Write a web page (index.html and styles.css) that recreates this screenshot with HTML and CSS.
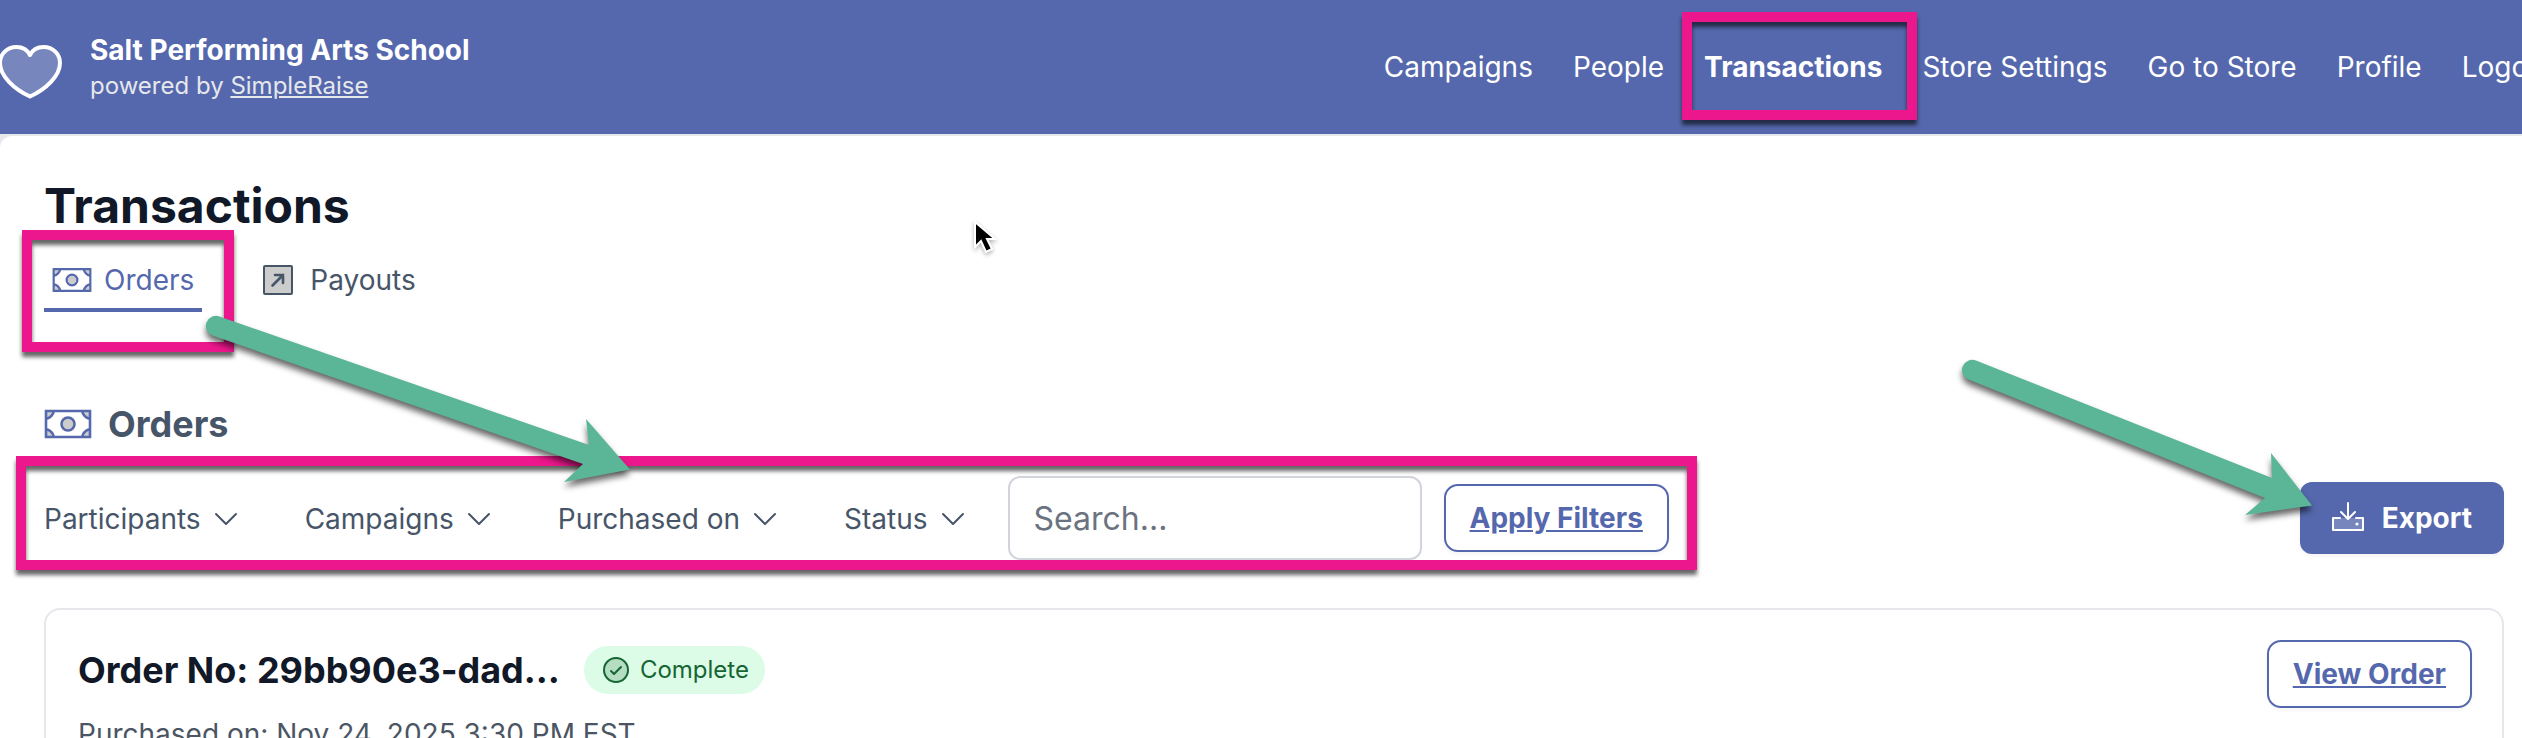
FILE: index.html
```html
<!DOCTYPE html>
<html lang="en">
<head>
    <meta charset="UTF-8">
    <meta name="viewport" content="width=device-width, initial-scale=1.0">
    <title>Transactions - Salt Performing Arts School</title>
    <link rel="stylesheet" href="styles.css">
</head>
<body>

    <!-- Shared icon shapes -->
    <svg class="sprite" aria-hidden="true">
        <symbol id="icon-money" viewBox="0 0 48 48">
            <path d="M2 11h8c-1 4-4 7-8 8zM46 11h-8c1 4 4 7 8 8zM2 37h8c-1-4-4-7-8-8zM46 37h-8c1-4 4-7 8-8z" fill="#000" fill-opacity=".2"/>
            <path d="M2 11h44v26H2zM2 19C6 18 9 15 10 11M46 19C42 18 39 15 38 11M2 29C6 30 9 33 10 37M46 29C42 30 39 33 38 37" fill="none" stroke="currentColor" stroke-width="2.600"/>
            <circle cx="24" cy="24" r="6.500" fill="#000" fill-opacity=".2"/>
            <circle cx="24" cy="24" r="6.500" fill="none" stroke="currentColor" stroke-width="2.600"/>
        </symbol>
        <symbol id="icon-chevron" viewBox="0 0 28 28">
            <path d="M3 9l10 10L23 9" fill="none" stroke="currentColor" stroke-width="2" stroke-linecap="round" stroke-linejoin="round"/>
        </symbol>
    </svg>

    <header class="site-header">
        <div class="brand">
            <svg class="brand-logo" viewBox="0 0 64 64" aria-hidden="true">
                <path d="M30 20C33 14 38 12 43.500 12 53 12 60 19 60 28 60 41 46 54 30 61.500 14 54 0 41 0 28 0 19 7 12 16.500 12 22 12 27 14 30 20z" fill="#fff" fill-opacity=".2" stroke="#fff" stroke-width="4" stroke-linejoin="round"/>
            </svg>
            <div class="brand-text">
                <div class="brand-name">Salt Performing Arts School</div>
                <div class="brand-powered">powered by <a href="#">SimpleRaise</a></div>
            </div>
        </div>
        <nav class="main-nav">
            <a href="#">Campaigns</a>
            <a href="#">People</a>
            <a href="#" class="active">Transactions<span class="highlight highlight-nav"></span></a>
            <a href="#">Store Settings</a>
            <a href="#">Go to Store</a>
            <a href="#">Profile</a>
            <a href="#">Logout</a>
        </nav>
    </header>

    <main class="page">
        <h1>Transactions</h1>

        <div class="tabs">
            <a href="#" class="tab selected">
                <svg class="tab-icon" aria-hidden="true"><use href="#icon-money"/></svg>
                Orders
                <span class="highlight highlight-tab"></span>
            </a>
            <a href="#" class="tab">
                <svg class="tab-icon" viewBox="0 0 40 40" aria-hidden="true">
                    <rect x="6" y="6" width="28" height="28" rx="1" fill="#000" fill-opacity=".2" stroke="currentColor" stroke-width="2"/>
                    <path d="M14.500 25.500L25 15M17 15h8v8" fill="none" stroke="currentColor" stroke-width="2.600" stroke-linecap="round"/>
                </svg>
                Payouts
            </a>
        </div>

        <h2><svg class="heading-icon" aria-hidden="true"><use href="#icon-money"/></svg>Orders</h2>

        <div class="toolbar">
            <form class="filters">
                <button type="button" class="filter">Participants <svg class="chevron" aria-hidden="true"><use href="#icon-chevron"/></svg></button>
                <button type="button" class="filter">Campaigns <svg class="chevron" aria-hidden="true"><use href="#icon-chevron"/></svg></button>
                <button type="button" class="filter">Purchased on <svg class="chevron" aria-hidden="true"><use href="#icon-chevron"/></svg></button>
                <button type="button" class="filter">Status <svg class="chevron" aria-hidden="true"><use href="#icon-chevron"/></svg></button>
                <div class="search-group">
                    <input type="text" class="search" placeholder="Search..." aria-label="Search">
                    <button type="button" class="btn btn-outline">Apply Filters</button>
                </div>
                <span class="highlight highlight-filters"></span>
            </form>
            <button type="button" class="btn btn-primary">
                <svg class="export-icon" viewBox="0 0 32 32" aria-hidden="true">
                    <path d="M1 16h30v12H1z" fill="#fff" fill-opacity=".2"/>
                    <path d="M8 16H1v12h30V16h-7M16 1v16M9 10l7 7 7-7" fill="none" stroke="currentColor" stroke-width="2" stroke-linecap="round" stroke-linejoin="round"/>
                    <circle cx="25" cy="22" r="1.600" fill="currentColor"/>
                </svg>
                Export
            </button>
        </div>

        <section class="order-card">
            <div class="order-head">
                <div class="order-title">
                    <h3>Order No: 29bb90e3-dad…</h3>
                    <span class="badge">
                        <svg class="badge-icon" viewBox="0 0 32 32" aria-hidden="true">
                            <circle cx="16" cy="16" r="12" fill="#166534" fill-opacity=".2" stroke="currentColor" stroke-width="2"/>
                            <path d="M11 17l3 3 7-7" fill="none" stroke="currentColor" stroke-width="2" stroke-linecap="round" stroke-linejoin="round"/>
                        </svg>
                        Complete
                    </span>
                </div>
                <a href="#" class="btn btn-outline">View Order</a>
            </div>
            <p class="order-date">Purchased on: Nov 24, 2025 3:30 PM EST</p>
        </section>
    </main>

    <!-- Guide arrows and pointer drawn over the page -->
    <svg class="arrow arrow-filters" viewBox="0 0 440 180" aria-hidden="true">
        <path d="M19.500 6.500L389 135l-3-26 44 50.500-66 12.500 19-18L12.500 25.500A10 10 0 0 1 19.500 6.500z"/>
    </svg>
    <svg class="arrow arrow-export" viewBox="0 0 360 165" aria-hidden="true">
        <path d="M16 10.500L312 128l-1-25 41 52.500L285 165l20-17L8.500 29.500A10 10 0 0 1 16 10.500z"/>
    </svg>
    <svg class="cursor" viewBox="0 0 24 36" aria-hidden="true">
        <path d="M2 2v25l6-6 5 11 6-3-5-10h8z" fill="#000" stroke="#fff" stroke-width="2"/>
    </svg>

</body>
</html>
```
FILE: styles.css
```css
* {
    box-sizing: border-box;
}
body {
    font-family: Inter, sans-serif;
    font-size: 28px;
    line-height: 40px;
    color: #475569;
    background-color: #e5e7eb;
    margin: 0;
    min-height: 100vh;
    position: relative;
    overflow: hidden;
    display: flex;
    flex-direction: column;
}
h1, h2, h3, p {
    margin: 0;
}
a {
    color: inherit;
}
button, input {
    font: inherit;
    color: inherit;
}
svg {
    flex: none;
}
.sprite {
    position: absolute;
    width: 0;
    height: 0;
}

/* Header */
.site-header {
    display: flex;
    justify-content: space-between;
    align-items: center;
    height: 134px;
    margin-right: -32px;
    background-color: #5568ad;
    color: #fff;
    white-space: nowrap;
}
.brand {
    display: flex;
    align-items: center;
    gap: 26px;
}
.brand-logo {
    width: 64px;
    height: 64px;
    overflow: visible;
}
.brand-text {
    padding-top: 2px;
}
.brand-name {
    font-weight: 700;
    line-height: 36px;
}
.brand-powered {
    font-size: 24px;
    line-height: 36px;
    color: #e5e7eb;
}
.main-nav {
    display: flex;
    gap: 40px;
}
.main-nav a {
    text-decoration: none;
    position: relative;
}
.main-nav .active {
    font-weight: 700;
}

/* Page */
.page {
    flex: 1;
    margin-top: 2px;
    padding: 42px 18px 0 44px;
    background-color: #fff;
    border-top-left-radius: 12px;
}
h1 {
    font-size: 48px;
    line-height: 56px;
    font-weight: 700;
    color: #111827;
}
.tabs {
    display: flex;
    gap: 48px;
    margin-top: 16px;
}
.tab {
    display: flex;
    align-items: center;
    gap: 12px;
    height: 62px;
    padding: 2px 8px 0;
    border-bottom: 4px solid transparent;
    text-decoration: none;
    position: relative;
}
.tab.selected {
    color: #5568ad;
    border-color: #5568ad;
}
.tab-icon {
    width: 40px;
    height: 40px;
}
h2 {
    display: flex;
    align-items: center;
    gap: 16px;
    margin-top: 84px;
    font-size: 36px;
    line-height: 56px;
    font-weight: 700;
}
.heading-icon {
    width: 48px;
    height: 48px;
    color: #5568ad;
}

/* Filters */
.toolbar {
    display: flex;
    justify-content: space-between;
    align-items: center;
    margin-top: 24px;
}
.filters {
    display: flex;
    align-items: center;
    gap: 64px;
    position: relative;
}
.filter {
    display: flex;
    align-items: center;
    gap: 12px;
    padding: 2px 0 0;
    border: 0;
    background: none;
    white-space: nowrap;
}
.chevron {
    width: 28px;
    height: 28px;
}
.search-group {
    display: flex;
    align-items: center;
    gap: 22px;
    margin-left: -24px;
}
.search {
    width: 414px;
    height: 84px;
    padding: 0 24px;
    font-size: 32px;
    background: #fff;
    border: 2px solid #d1d5db;
    border-radius: 12px;
}
.search::placeholder {
    color: #6b7280;
    opacity: 1;
}
.btn {
    display: flex;
    align-items: center;
    font-weight: 700;
    white-space: nowrap;
    border-radius: 14px;
    box-shadow: 0 2px 4px rgba(0,0,0,0.05);
}
.btn-outline {
    height: 68px;
    padding: 0 24px;
    color: #5568ad;
    background: #fff;
    border: 2px solid #5568ad;
    text-decoration: underline;
}
.btn-primary {
    height: 72px;
    gap: 18px;
    padding: 0 32px;
    color: #fff;
    background-color: #5568ad;
    border: 0;
    border-radius: 12px;
}
.export-icon {
    width: 32px;
    height: 32px;
}

/* Order card */
.order-card {
    margin-top: 48px;
    padding: 30px 30px 30px 32px;
    border: 2px solid #e5e7eb;
    border-radius: 16px;
}
.order-head {
    display: flex;
    align-items: flex-start;
    justify-content: space-between;
}
.order-title {
    display: flex;
    align-items: center;
    gap: 24px;
}
h3 {
    font-size: 36px;
    line-height: 60px;
    font-weight: 700;
    color: #111827;
}
.badge {
    display: flex;
    align-items: center;
    gap: 8px;
    height: 48px;
    padding: 0 16px;
    font-size: 24px;
    color: #166534;
    background-color: #dcfce7;
    border-radius: 24px;
}
.badge-icon {
    width: 32px;
    height: 32px;
}
.order-date {
    margin-top: 6px;
    color: #4b5563;
}

/* Highlight boxes and arrows */
.highlight {
    position: absolute;
    border: 10px solid #ec178c;
    filter: drop-shadow(0 5px 2px rgba(0,0,0,0.6));
    pointer-events: none;
}
.highlight-nav {
    inset: -35px -35px -33px -22px;
}
.highlight-tab {
    inset: -20px -32px -44px -22px;
}
.highlight-filters {
    inset: -20px -28px -10px -28px;
}
.arrow {
    position: absolute;
    fill: #5bb597;
    filter: drop-shadow(0 5px 3px rgba(0,0,0,0.6));
    pointer-events: none;
}
.arrow-filters {
    top: 310px;
    left: 200px;
    width: 440px;
    height: 180px;
}
.arrow-export {
    top: 350px;
    right: 202px;
    width: 360px;
    height: 165px;
}
.cursor {
    position: absolute;
    top: 220px;
    left: 973px;
    width: 24px;
    height: 36px;
    filter: drop-shadow(0 2px 2px rgba(0,0,0,0.3));
}
```
